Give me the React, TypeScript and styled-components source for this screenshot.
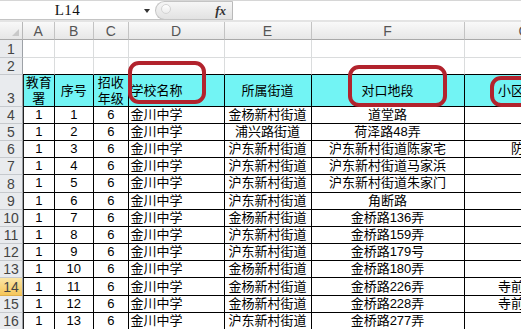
import React from 'react';
import styled, { createGlobalStyle } from 'styled-components';

const GlobalStyle = createGlobalStyle`
  html, body {
    margin: 0;
    padding: 0;
    background: #fff;
    overflow: hidden;
  }
  body {
    font-family: "Liberation Sans", "Noto Sans CJK SC", sans-serif;
  }
`;

const COLS = ['A', 'B', 'C', 'D', 'E', 'F', 'G'];
const ALIGN: Array<'left' | 'center'> = ['center', 'center', 'center', 'left', 'center', 'center', 'center'];

const HEAD = [['教育', '署'], ['序号'], ['招收', '年级'], ['学校名称'], ['所属街道'], ['对口地段'], ['小区名称']];

const ROWS: string[][] = [
  ['1', '1', '6', '金川中学', '金杨新村街道', '道堂路', ''],
  ['1', '2', '6', '金川中学', '浦兴路街道', '荷泽路48弄', ''],
  ['1', '3', '6', '金川中学', '沪东新村街道', '沪东新村街道陈家宅', '防汛'],
  ['1', '4', '6', '金川中学', '沪东新村街道', '沪东新村街道马家浜', ''],
  ['1', '5', '6', '金川中学', '沪东新村街道', '沪东新村街道朱家门', ''],
  ['1', '6', '6', '金川中学', '沪东新村街道', '角断路', ''],
  ['1', '7', '6', '金川中学', '金杨新村街道', '金桥路136弄', ''],
  ['1', '8', '6', '金川中学', '沪东新村街道', '金桥路159弄', ''],
  ['1', '9', '6', '金川中学', '沪东新村街道', '金桥路179号', ''],
  ['1', '10', '6', '金川中学', '金杨新村街道', '金桥路180弄', ''],
  ['1', '11', '6', '金川中学', '金杨新村街道', '金桥路226弄', '寺前新村'],
  ['1', '12', '6', '金川中学', '金杨新村街道', '金桥路228弄', '寺前新村'],
  ['1', '13', '6', '金川中学', '沪东新村街道', '金桥路277弄', ''],
];

const ACTIVE_ROW = 14;

const App: React.FC = () => {
  return (
    <Sheet>
      <GlobalStyle />
      <FormulaBar>
        <NameBox>
          <NameText>L14</NameText>
          <DropArrow />
        </NameBox>
        <FxPill>
          <Knob />
          <FxLabel>fx</FxLabel>
        </FxPill>
        <FormulaInput />
      </FormulaBar>

      <Grid>
        <Corner />
        {COLS.map((c) => (
          <ColHead key={c}>{c}</ColHead>
        ))}

        {[1, 2].map((r) => (
          <React.Fragment key={r}>
            <RowHead>{r}</RowHead>
            {COLS.map((c, i) => (
              <Cell key={c} $edge={r === 2} $align={ALIGN[i]} />
            ))}
          </React.Fragment>
        ))}

        <RowHead>3</RowHead>
        {HEAD.map((lines, i) => (
          <Cell key={i} $boxed $head $first={i === 0} $align={ALIGN[i]}>
            <span>
              {lines.map((l, j) => (
                <React.Fragment key={j}>
                  {j > 0 && <br />}
                  {l}
                </React.Fragment>
              ))}
            </span>
          </Cell>
        ))}

        {ROWS.map((row, r) => (
          <React.Fragment key={r}>
            <RowHead $active={r + 4 === ACTIVE_ROW}>{r + 4}</RowHead>
            {row.map((v, i) => (
              <Cell key={i} $boxed $first={i === 0} $align={ALIGN[i]}>
                {v}
              </Cell>
            ))}
          </React.Fragment>
        ))}
      </Grid>

      <Mark $x={128} $y={61} $w={78} $h={43} />
      <Mark $x={348} $y={65} $w={99} $h={42} />
      <Mark $x={490} $y={76} $w={70} $h={31} />
    </Sheet>
  );
};

const Sheet = styled.div`
  position: relative;
  width: 521px;
  height: 329px;
  overflow: hidden;
  background: #fff;
`;

const FormulaBar = styled.div`
  display: flex;
  height: 22px;
  box-sizing: border-box;
  border-top: 1px solid #d6d6d6;
  border-bottom: 2px solid #e4e4e4;
  box-shadow: inset 0 -1px 0 #c4c4c4;
`;

const NameBox = styled.div`
  display: flex;
  align-items: center;
  width: 155px;
`;

const NameText = styled.div`
  width: 135px;
  text-align: center;
  font-family: "Liberation Serif", "DejaVu Serif", serif;
  font-size: 15px;
  letter-spacing: 0.5px;
  color: #111;
`;

const DropArrow = styled.div`
  margin-left: 9px;
  width: 0;
  height: 0;
  border-left: 3.5px solid transparent;
  border-right: 3.5px solid transparent;
  border-top: 4px solid #333;
`;

const FxPill = styled.div`
  display: flex;
  align-items: center;
  justify-content: space-between;
  width: 78px;
  height: 19px;
  box-sizing: border-box;
  padding: 0 6px 0 5px;
  border: 1px solid #c4c4c4;
  border-right-color: #b9b9b9;
  border-radius: 10px 0 0 10px;
  background: linear-gradient(#f6f6f6, #e2e2e2);
`;

const Knob = styled.div`
  width: 8px;
  height: 8px;
  border-radius: 50%;
  border: 1px solid #d4d4d4;
  background: linear-gradient(#ffffff, #ececec);
  margin-top: -4px;
`;

const FxLabel = styled.i`
  font-family: "Liberation Serif", serif;
  font-weight: bold;
  font-size: 13px;
  color: #333;
`;

const FormulaInput = styled.div`
  flex: 1;
  background: #fff;
`;

const Grid = styled.div`
  display: grid;
  grid-template-columns: 23px 31.5px 39.5px 34.5px 96px 87px 153px 120px;
  grid-template-rows: 18px 17.5px 17.5px 31.6px repeat(13, 17.2px);
  width: 584.5px;
`;

const Corner = styled.div`
  position: relative;
  box-sizing: border-box;
  background: linear-gradient(#f8f8f8, #e6e6e6);
  border-right: 1px solid #b8b8b8;
  border-bottom: 1px solid #a9a9a9;
  &::after {
    content: '';
    position: absolute;
    right: 3px;
    bottom: 3px;
    border-style: solid;
    border-width: 0 0 7px 7px;
    border-color: transparent transparent #c9c9c9 transparent;
  }
`;

const ColHead = styled.div`
  display: flex;
  align-items: center;
  justify-content: center;
  box-sizing: border-box;
  background: linear-gradient(#f9f9f9, #e7e7e7);
  border-right: 1px solid #c3c3c3;
  border-bottom: 1px solid #a9a9a9;
  font-size: 14px;
  color: #555;
`;

const RowHead = styled.div<{ $active?: boolean }>`
  display: flex;
  align-items: flex-end;
  justify-content: center;
  box-sizing: border-box;
  background: ${(p) => (p.$active ? 'linear-gradient(#fbe6a6, #f5c65a)' : '#e9ebee')};
  border-right: 1px solid #9da1a6;
  border-bottom: 1px solid ${(p) => (p.$active ? '#e0b04a' : '#c6c9cd')};
  font-size: 14px;
  line-height: 16px;
  color: #444;
`;

const Cell = styled.div<{
  $align: 'left' | 'center';
  $boxed?: boolean;
  $head?: boolean;
  $edge?: boolean;
  $first?: boolean;
}>`
  display: flex;
  align-items: center;
  justify-content: ${(p) => (p.$align === 'left' ? 'flex-start' : 'center')};
  box-sizing: border-box;
  padding: ${(p) => (p.$head ? '1px 2px 0' : '0 2px')};
  overflow: hidden;
  white-space: nowrap;
  text-align: center;
  font-size: 13px;
  line-height: 16px;
  color: #000;
  background: ${(p) => (p.$head ? '#72f4f4' : '#fff')};
  border-right: 1px solid ${(p) => (p.$boxed ? '#000' : '#dadcdd')};
  border-bottom: 1px solid ${(p) => (p.$boxed || p.$edge ? '#000' : '#dadcdd')};
  border-left: ${(p) => (p.$first ? '1px solid #222' : 'none')};
`;

const Mark = styled.div<{ $x: number; $y: number; $w: number; $h: number }>`
  position: absolute;
  left: ${(p) => p.$x}px;
  top: ${(p) => p.$y}px;
  width: ${(p) => p.$w}px;
  height: ${(p) => p.$h}px;
  box-sizing: border-box;
  border: 4px solid #b2232d;
  border-radius: 11px;
  pointer-events: none;
`;

export default App;
